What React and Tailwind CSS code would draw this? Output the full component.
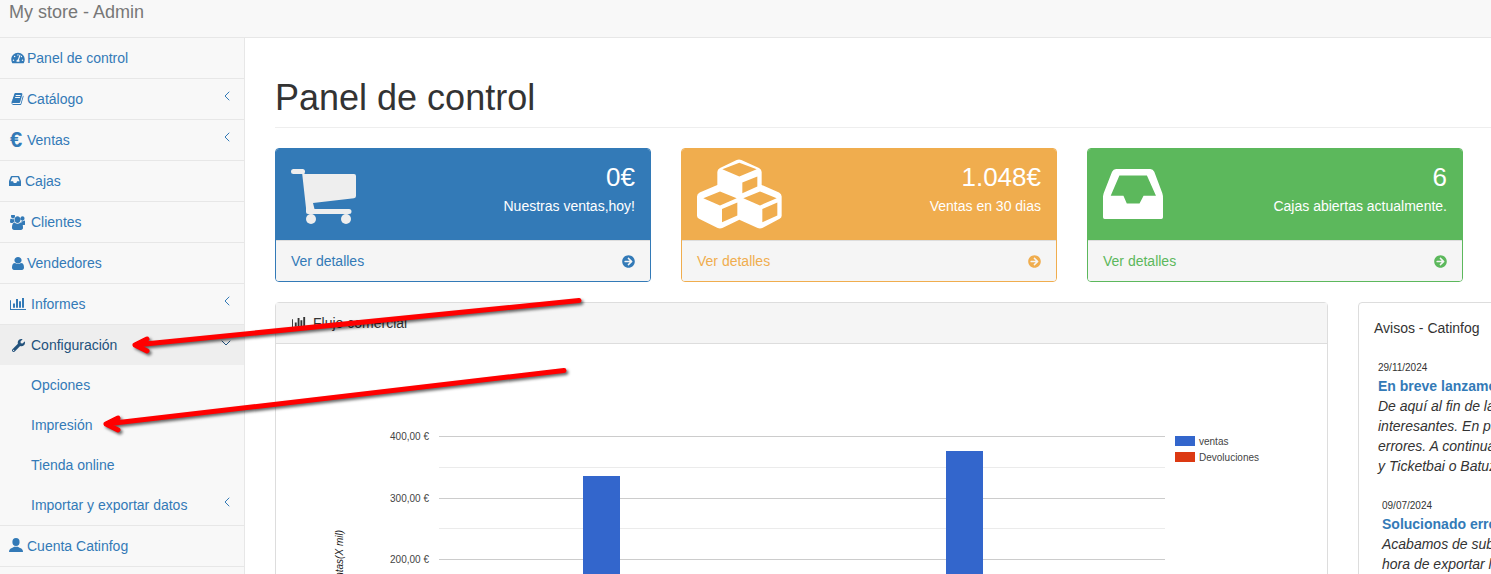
import { ChevronLeft, ChevronDown } from "lucide-react";
import { FaTachometerAlt, FaWrench, FaArrowCircleRight } from "react-icons/fa";

// font-awesome 4 glyphs, the icon packages only carry the newer drawings
const glyphs = {
  book: "M1703 478q40 57 18 129l-275 906q-19 64-76.5 107.5t-122.5 43.5h-923q-77 0-148.5-53.5t-99.5-131.5q-24-67-2-127 0-4 3-27t4-37q1-8-3-21.5t-3-19.5q2-11 8-21t16.5-23.5 16.5-23.5q23-38 45-91.5t30-91.5q3-10 .5-30t-.5-28q3-11 17-28t17-23q21-36 42-92t25-90q1-9-2.5-32t.5-28q4-13 22-30.5t22-22.5q19-26 42.5-84.5t27.5-96.5q1-8-3-25.5t-2-26.5q2-8 9-18t18-23 17-21q8-12 16.5-30.5t15-35 16-36 19.5-32 26.5-23.5 36-11.5 47.5 5.5l-1 3q38-9 51-9h761q74 0 114 56t18 130l-274 906q-36 119-71.5 153.5t-128.5 34.5h-869q-27 0-38 15-11 16-1 43 24 70 144 70h923q29 0 56-15.5t35-41.5l300-987q7-22 5-57 38 15 59 43zm-1064 2q-4 13 2 22.5t20 9.5h608q13 0 25.5-9.5t16.5-22.5l21-64q4-13-2-22.5t-20-9.5h-608q-13 0-25.5 9.5t-16.5 22.5zm-83 256q-4 13 2 22.5t20 9.5h608q13 0 25.5-9.5t16.5-22.5l21-64q4-13-2-22.5t-20-9.5h-608q-13 0-25.5 9.5t-16.5 22.5z",
  users: "M593 896q-162 5-265 128h-134q-82 0-138-40.5t-56-118.5q0-353 124-353 6 0 43.5 21t97.5 42.5 119 21.5q67 0 133-23-5 37-5 66 0 139 81 256zm1071 637q0 120-73 189.5t-194 69.5h-874q-121 0-194-69.5t-73-189.5q0-53 3.5-103.5t14-109 26.5-108.5 43-97.5 62-81 85.5-53.5 111.5-20q10 0 43 21.5t73 48 107 48 135 21.5 135-21.5 107-48 73-48 43-21.5q61 0 111.5 20t85.5 53.5 62 81 43 97.5 26.5 108.5 14 109 3.5 103.5zm-1024-1277q0 106-75 181t-181 75-181-75-75-181 75-181 181-75 181 75 75 181zm704 384q0 159-112.5 271.5t-271.5 112.5-271.5-112.5-112.5-271.5 112.5-271.5 271.5-112.5 271.5 112.5 112.5 271.5zm640 448q0 78-56 118.5t-138 40.5h-134q-103-123-265-128 81-117 81-256 0-29-5-66 66 23 133 23 59 0 119-21.5t97.5-42.5 43.5-21q124 0 124 353zm-128-576q0 106-75 181t-181 75-181-75-75-181 75-181 181-75 181 75 75 181z",
  user: "M1536 1399q0 109-62.5 187t-150.5 78h-854q-88 0-150.5-78t-62.5-187q0-85 8.5-160.5t31.5-152 58.5-131 94-89 134.5-34.5q131 128 313 128t313-128q76 0 134.5 34.5t94 89 58.5 131 31.5 152 8.5 160.5zm-256-887q0 159-112.5 271.5t-271.5 112.5-271.5-112.5-112.5-271.5 112.5-271.5 271.5-112.5 271.5 112.5 112.5 271.5z",
  chart: "M640 896v512h-256v-512h256zm384-512v1024h-256v-1024h256zm1024 1152v128h-2048v-1152h128v1024h1920zm-640-896v768h-256v-768h256zm384-384v1152h-256v-1152h256z",
};

function Glyph({ name, box, className }) {
  return (
    <svg viewBox={box} className={className} fill="currentColor" preserveAspectRatio="none">
      <path d={glyphs[name]} />
    </svg>
  );
}

function InboxIcon({ className }) {
  return (
    <svg viewBox="69 88 179 149" className={className} fill="currentColor" fillRule="evenodd" preserveAspectRatio="none">
      <path d="M108 88H210Q218 88 222 96L246 160Q248 166 248 175V232Q248 237 243 237H74Q69 237 69 232V175Q69 166 71 160L96 96Q100 88 108 88ZM118 107L92 168H130L140 191H178L190 168H227L200 107Z" />
    </svg>
  );
}

function CubesIcon({ className }) {
  return (
    <svg viewBox="66 57 255 211" className={className} fill="currentColor" fillRule="evenodd" preserveAspectRatio="none">
      <path d="M185 60Q192 57 199 60L252 84Q260 88 260 96V135L312 158Q320 162 320 170V228Q320 234 314 237L262 265Q255 268 248 265L193 240L142 265Q135 268 128 265L72 237Q66 234 66 228V170Q66 162 74 158L127 135V96Q127 88 135 84ZM142 88L193 110L245 88L193 68ZM202 128V160L247 140V110ZM85 175L135 197L185 175L135 155ZM141 208V248L187 227V188ZM205 175L255 197L305 175L255 155ZM262 208V248L307 227V188Z" />
    </svg>
  );
}

function CartIcon({ className }) {
  return (
    <svg viewBox="0 0 65 55" className={className} fill="currentColor" preserveAspectRatio="none">
      <rect x="0" y="0" width="14" height="5" rx="2.5" />
      <path d="M11 3L14 5H63Q65 5 65 7V27Q65 29 63 29.3L22 34L23.5 40H58Q60.5 40 60.5 42.5T58 45H17Q15 45 15 43V39Z" />
      <circle cx="20" cy="50" r="5" />
      <circle cx="55" cy="50" r="5" />
    </svg>
  );
}

function AccountIcon({ className }) {
  return (
    <svg viewBox="0 0 14 14" className={className} fill="currentColor" preserveAspectRatio="none">
      <ellipse cx="7" cy="4" rx="3.6" ry="4" />
      <path d="M0 14Q0 10.8 3 10L5.2 8.8H8.8L11 10Q14 10.8 14 14Z" />
    </svg>
  );
}

function SideItem({ icon, label, pad, gap, chevron, active }) {
  return (
    <li className={active ? "bg-[#eeeeee] text-[#23527c]" : "border-b border-[#e7e7e7] text-[#337ab7]"}>
      <a className={`flex items-center h-10 pr-[9px] ${pad}`}>
        <span className={`flex items-center shrink-0 ${gap}`}>{icon}</span>
        <span>{label}</span>
        {chevron === "left" && <ChevronLeft size={16} strokeWidth={1.5} className="ml-auto mb-[6px]" />}
        {chevron === "down" && <ChevronDown size={16} strokeWidth={1.5} className="ml-auto mb-[5px] mr-[1px]" />}
      </a>
    </li>
  );
}

function SubItem({ label, chevron }) {
  return (
    <li className="flex items-center h-10 pl-[31px] pr-[9px] text-[#337ab7]">
      <span>{label}</span>
      {chevron && <ChevronLeft size={16} strokeWidth={1.5} className="ml-auto mb-[6px]" />}
    </li>
  );
}

function Sidebar() {
  return (
    <aside className="w-[245px] shrink-0 bg-[#f8f8f8] border-r border-[#e7e7e7]">
      <ul>
        <SideItem pad="pl-[11px]" gap="mr-[2px]" label="Panel de control" icon={<FaTachometerAlt className="w-[14px] h-[12px]" />} />
        <SideItem pad="pl-[11px]" gap="mr-[3px]" label="Catálogo" chevron="left" icon={<Glyph name="book" box="0 128 1792 1536" className="w-[13px] h-[12px]" />} />
        <SideItem pad="pl-[10px]" gap="w-[17px]" label="Ventas" chevron="left" icon={<span className="text-[22px] font-bold leading-none mb-[1px]">€</span>} />
        <SideItem pad="pl-[9px]" gap="mr-[4px]" label="Cajas" icon={<InboxIcon className="w-[12px] h-[10px]" />} />
        <SideItem pad="pl-[10px]" gap="mr-[6px]" label="Clientes" icon={<Glyph name="users" box="0 128 1920 1664" className="w-[15px] h-[15px]" />} />
        <SideItem pad="pl-[12px]" gap="mr-[3px]" label="Vendedores" icon={<Glyph name="user" box="256 128 1280 1536" className="w-[12px] h-[13px]" />} />
        <SideItem pad="pl-[10px]" gap="mr-[5px]" label="Informes" chevron="left" icon={<Glyph name="chart" box="0 256 2048 1408" className="w-[16px] h-[12px]" />} />
        <SideItem active pad="pl-[12px]" gap="mr-[6px]" label="Configuración" chevron="down" icon={<FaWrench className="w-[13px] h-[13px]" />} />
        <li className="border-b border-[#e7e7e7]">
          <ul>
            <SubItem label="Opciones" />
            <SubItem label="Impresión" />
            <SubItem label="Tienda online" />
            <SubItem label="Importar y exportar datos" chevron />
          </ul>
        </li>
        <SideItem pad="pl-[9px]" gap="mr-[4px]" label="Cuenta Catinfog" icon={<AccountIcon className="w-[14px] h-[14px] mb-[3px]" />} />
      </ul>
    </aside>
  );
}

function StatCard({ border, bg, text, icon, value, label }) {
  return (
    <div className={`w-[376px] shrink-0 rounded border ${border} overflow-hidden`}>
      <div className={`flex justify-between h-[91px] px-[15px] pt-[10px] text-white ${bg}`}>
        <div className="w-[90px]">{icon}</div>
        <div className="text-right">
          <div className="text-[26px] leading-[37px]">{value}</div>
          <div className="text-sm leading-5">{label}</div>
        </div>
      </div>
      <div className={`flex items-center justify-between h-[41px] px-[15px] bg-[#f5f5f5] border-t border-[#dddddd] ${text}`}>
        <span>Ver detalles</span>
        <FaArrowCircleRight className="w-[13px] h-[13px]" />
      </div>
    </div>
  );
}

function SalesChart() {
  const axis = [
    { y: 436.5, label: "400,00 €" },
    { y: 498.5, label: "300,00 €" },
    { y: 559.5, label: "200,00 €" },
  ];
  return (
    <svg viewBox="276 344 1051 240" className="block w-[1051px] h-[240px]" fontFamily="'Liberation Sans', sans-serif" fontSize="10">
      <line x1="439" x2="1165" y1="467.5" y2="467.5" stroke="#ebebeb" />
      <line x1="439" x2="1165" y1="528.5" y2="528.5" stroke="#ebebeb" />
      {axis.map((a) => (
        <g key={a.label}>
          <line x1="439" x2="1165" y1={a.y} y2={a.y} stroke="#cccccc" />
          <text x="429" y={a.y + 3.5} textAnchor="end" fill="#444444">{a.label}</text>
        </g>
      ))}
      <rect x="583" y="476" width="37" height="120" fill="#3366cc" />
      <rect x="946" y="451" width="37" height="140" fill="#3366cc" />
      <rect x="1175" y="436" width="20" height="10" fill="#3366cc" />
      <text x="1199" y="444.5" fill="#444444">ventas</text>
      <rect x="1175" y="452" width="20" height="10" fill="#dc3912" />
      <text x="1199" y="460.5" fill="#444444">Devoluciones</text>
      <text x="0" y="0" transform="translate(343 530) rotate(-90)" textAnchor="end" fontStyle="italic" fill="#222222">Ventas(X mil)</text>
    </svg>
  );
}

function Notice({ pad, date, title, lines }) {
  return (
    <div className={`mt-[21px] ${pad}`}>
      <div className="text-[10px] leading-[17px] text-[#333333]">{date}</div>
      <div className="font-bold text-[#337ab7]">{title}</div>
      {lines.map((line) => (
        <div key={line} className="italic">{line}</div>
      ))}
    </div>
  );
}

// the two red arrows somebody painted over the screenshot
function Annotations() {
  return (
    <svg
      viewBox="0 0 1491 574"
      className="absolute inset-0 w-[1491px] h-[574px] pointer-events-none drop-shadow-[2px_2px_1.5px_rgba(0,0,0,0.6)]"
      fill="none"
      stroke="#ff0000"
      strokeWidth="5"
      strokeLinecap="round"
      strokeLinejoin="round"
    >
      <path d="M579 300.5L135 345M147 339L135 345L147 351" />
      <path d="M564 370.5L106 424M118 418L106 424L118 430" />
    </svg>
  );
}

export default function App() {
  return (
    <div className="relative h-[574px] overflow-hidden bg-white text-sm leading-5 text-[#333333] font-['Liberation_Sans',Arial,sans-serif]">
      <header className="h-[38px] bg-[#f8f8f8] border-b border-[#e7e7e7] pl-[9px] text-lg leading-6 text-[#777777]">
        My store - Admin
      </header>

      <div className="flex">
        <Sidebar />

        <main className="flex-1 min-w-0 overflow-hidden pl-[30px] pt-10">
          <h1 className="text-4xl leading-[40px] font-normal pb-[9px] border-b border-[#eeeeee]">Panel de control</h1>

          <div className="flex gap-[30px] mt-5">
            <StatCard
              border="border-[#337ab7]"
              bg="bg-[#337ab7]"
              text="text-[#337ab7]"
              value="0€"
              label="Nuestras ventas,hoy!"
              icon={<CartIcon className="w-[65px] h-[55px] mt-[10px] text-[#eeeeee]" />}
            />
            <StatCard
              border="border-[#f0ad4e]"
              bg="bg-[#f0ad4e]"
              text="text-[#f0ad4e]"
              value="1.048€"
              label="Ventas en 30 dias"
              icon={<CubesIcon className="w-[85px] h-[70px]" />}
            />
            <StatCard
              border="border-[#5cb85c]"
              bg="bg-[#5cb85c]"
              text="text-[#5cb85c]"
              value="6"
              label="Cajas abiertas actualmente."
              icon={<InboxIcon className="w-[60px] h-[50px] mt-[10px]" />}
            />
          </div>

          <div className="flex gap-[30px] mt-5 w-[1594px]">
            <section className="w-[1053px] shrink-0 rounded border border-[#dddddd]">
              <div className="flex items-center h-[41px] pl-4 bg-[#f5f5f5] border-b border-[#dddddd]">
                <Glyph name="chart" box="0 256 2048 1408" className="w-[15px] h-3 mr-[6px]" />
                Flujo comercial
              </div>
              <SalesChart />
            </section>

            <section className="w-[511px] shrink-0 rounded border border-[#dddddd] pt-[15px] pl-[15px] whitespace-nowrap">
              <div>Avisos - Catinfog</div>
              <Notice
                pad="pl-[4px]"
                date="29/11/2024"
                title="En breve lanzamos"
                lines={["De aquí al fin de la", "interesantes. En particular", "errores. A continuación", "y Ticketbai o Batuz"]}
              />
              <Notice
                pad="pl-[8px]"
                date="09/07/2024"
                title="Solucionado error"
                lines={["Acabamos de subir", "hora de exportar los"]}
              />
            </section>
          </div>
        </main>
      </div>

      <Annotations />
    </div>
  );
}
